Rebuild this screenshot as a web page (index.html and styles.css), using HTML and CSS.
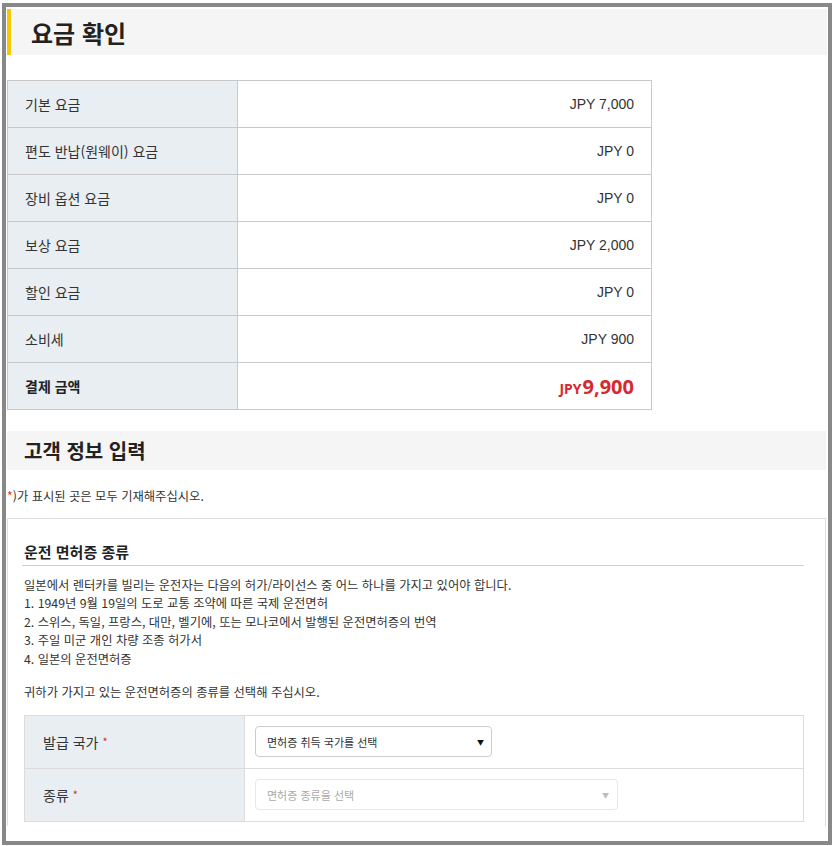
FILE: index.html
```html
<!DOCTYPE html>
<html lang="ko">
<head>
<meta charset="utf-8">
<title>요금 확인</title>
<link rel="stylesheet" href="styles.css">
</head>
<body>
<div class="frame">
  <h1 class="title">요금 확인</h1>
  <table class="fees">
    <tr><td class="lbl">기본 요금</td><td class="val">JPY 7,000</td></tr>
    <tr><td class="lbl">편도 반납(원웨이) 요금</td><td class="val">JPY 0</td></tr>
    <tr><td class="lbl">장비 옵션 요금</td><td class="val">JPY 0</td></tr>
    <tr><td class="lbl">보상 요금</td><td class="val">JPY 2,000</td></tr>
    <tr><td class="lbl">할인 요금</td><td class="val">JPY 0</td></tr>
    <tr><td class="lbl">소비세</td><td class="val">JPY 900</td></tr>
    <tr><td class="lbl strong">결제 금액</td><td class="val total"><span class="cur">JPY</span>9,900</td></tr>
  </table>

  <h2 class="subtitle">고객 정보 입력</h2>
  <p class="note"><span class="req">*</span>)가 표시된 곳은 모두 기재해주십시오.</p>

  <div class="box">
    <h3 class="box-title">운전 면허증 종류</h3>
    <p class="desc">일본에서 렌터카를 빌리는 운전자는 다음의 허가/라이선스 중 어느 하나를 가지고 있어야 합니다.<br>1. 1949년 9월 19일의 도로 교통 조약에 따른 국제 운전면허<br>2. 스위스, 독일, 프랑스, 대만, 벨기에, 또는 모나코에서 발행된 운전면허증의 번역<br>3. 주일 미군 개인 차량 조종 허가서<br>4. 일본의 운전면허증</p>
    <p class="desc second">귀하가 가지고 있는 운전면허증의 종류를 선택해 주십시오.</p>

    <table class="form">
      <tr>
        <td class="flbl">발급 국가 <span class="req">*</span></td>
        <td class="fval"><div class="select s1"><span>면허증 취득 국가를 선택</span><span class="arrow">▼</span></div></td>
      </tr>
      <tr>
        <td class="flbl">종류 <span class="req">*</span></td>
        <td class="fval"><div class="select s2 disabled"><span>면허증 종류을 선택</span><span class="arrow">▼</span></div></td>
      </tr>
    </table>
  </div>
</div>
</body>
</html>
```

FILE: styles.css
```css
html, body {
  margin: 0;
  padding: 0;
  background: #ffffff;
}
body {
  font-family: "Noto Sans CJK KR", "Noto Sans", sans-serif;
  color: #333333;
}
.frame {
  margin: 3px 0 0 2px;
  width: 830px;
  height: 842px;
  box-sizing: border-box;
  border: 4px solid #87888a;
  padding: 2px 1px 0 1px;
  overflow: hidden;
  background: #ffffff;
}
.title {
  margin: 0;
  height: 46px;
  box-sizing: border-box;
  display: flex;
  align-items: center;
  padding-left: 20px;
  border-left: 4px solid #f6c800;
  background: #f5f5f5;
  font-size: 24px;
  font-weight: 700;
  color: #222222;
}
.fees {
  margin-top: 25px;
  width: 645px;
  border-collapse: collapse;
  table-layout: fixed;
}
.fees td {
  border: 1px solid #c9c9c9;
  height: 47px;
  padding: 0;
  box-sizing: border-box;
}
.fees .lbl {
  width: 230px;
  background: #e8eef2;
  padding-left: 17px;
  font-size: 14px;
  color: #333333;
}
.fees .lbl.strong {
  font-weight: 700;
  color: #222222;
}
.fees .val {
  text-align: right;
  padding-right: 17px;
  font-family: "Liberation Sans", Arial, sans-serif;
  font-size: 14px;
  color: #333333;
}
.fees .val.total {
  font-family: "Noto Sans", "Noto Sans CJK KR", sans-serif;
  font-weight: 700;
  font-size: 20px;
  color: #d7282f;
}
.fees .cur {
  font-size: 14px;
  margin-right: 1px;
}
.subtitle {
  margin: 21px 1px 0 0;
  height: 39px;
  box-sizing: border-box;
  display: flex;
  align-items: center;
  padding-left: 17px;
  background: #f5f5f5;
  font-size: 20px;
  font-weight: 700;
  color: #222222;
}
.note {
  margin: 17px 0 0 0;
  font-size: 12.3px;
  line-height: 18px;
  color: #333333;
}
.req {
  color: #e0262f;
}
.box {
  margin: 13px 1px 0 0;
  border: 1px solid #dddddd;
  border-bottom: none;
  height: 308px;
  box-sizing: border-box;
  padding: 23px 21px 0 14px;
}
.box-title {
  margin: 0;
  padding: 0 0 3px 2px;
  font-size: 15px;
  line-height: 20px;
  font-weight: 700;
  color: #222222;
  border-bottom: 1px solid #cfcfcf;
}
.desc {
  margin: 10px 0 0 2px;
  font-size: 12.3px;
  line-height: 18.4px;
  color: #333333;
}
.desc.second {
  margin-top: 14.5px;
}
.form {
  margin: 14px 0 0 2px;
  width: 780px;
  border-collapse: collapse;
  table-layout: fixed;
}
.form td {
  border: 1px solid #dcdcdc;
  height: 53px;
  padding: 0;
  box-sizing: border-box;
}
.form .flbl {
  width: 220px;
  background: #e8eef2;
  padding-left: 18px;
  font-size: 14px;
  color: #333333;
}
.form .flbl .req {
  font-size: 11px;
  vertical-align: 2px;
}
.form .fval {
  padding-left: 10px;
}
.select {
  height: 31px;
  box-sizing: border-box;
  border: 1px solid #cccccc;
  border-radius: 4px;
  display: flex;
  align-items: center;
  justify-content: space-between;
  padding: 0 7px 0 11px;
  font-size: 11px;
  color: #333333;
  background: #ffffff;
}
.select .arrow {
  font-size: 7px;
  color: #111111;
}
.s1 {
  width: 237px;
}
.s2 {
  width: 363px;
  padding-right: 8px;
}
.select.disabled {
  border-color: #e8e8e8;
  color: #aaaaaa;
}
.select.disabled .arrow {
  color: #bdbdbd;
}
```
